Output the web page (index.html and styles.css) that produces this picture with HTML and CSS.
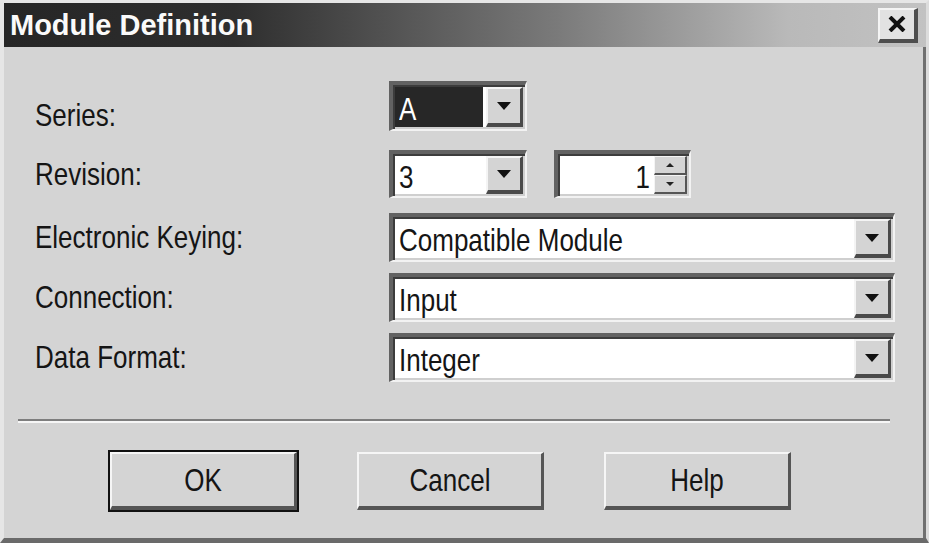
FILE: index.html
```html
<!DOCTYPE html>
<html lang="en">
<head>
    <meta charset="UTF-8">
    <title>Module Definition</title>
    <link rel="stylesheet" href="styles.css">
</head>
<body>
    <div class="window">
        <div class="titlebar">
            <span class="title">Module Definition</span>
            <div class="close">
                <svg width="18" height="16" viewBox="0 0 18 16">
                    <path d="M2 1 L16 15 M16 1 L2 15" stroke="#111" stroke-width="4" fill="none"/>
                </svg>
            </div>
        </div>
        <div class="content">
            <div class="form">
                <div class="row row-series">
                    <span class="label label-series"><span class="txt">Series:</span></span>
                    <div class="combo combo-short">
                        <span class="value selected"><span class="txt">A</span></span>
                        <span class="drop"><svg width="14" height="8" viewBox="0 0 14 8"><path d="M0 0 H14 L7 8 Z" fill="#111"/></svg></span>
                    </div>
                </div>
                <div class="row row-revision">
                    <span class="label"><span class="txt">Revision:</span></span>
                    <div class="combo combo-short">
                        <span class="value"><span class="txt">3</span></span>
                        <span class="drop"><svg width="14" height="8" viewBox="0 0 14 8"><path d="M0 0 H14 L7 8 Z" fill="#111"/></svg></span>
                    </div>
                    <div class="combo spinner">
                        <span class="value num"><span class="txt">1</span></span>
                        <span class="spin">
                            <span class="spin-btn"><svg width="8" height="4" viewBox="0 0 8 4"><path d="M0 4 H8 L4 0 Z" fill="#222"/></svg></span>
                            <span class="spin-btn"><svg width="8" height="4" viewBox="0 0 8 4"><path d="M0 0 H8 L4 4 Z" fill="#222"/></svg></span>
                        </span>
                    </div>
                </div>
                <div class="row">
                    <span class="label"><span class="txt">Electronic Keying:</span></span>
                    <div class="combo combo-wide">
                        <span class="value"><span class="txt">Compatible Module</span></span>
                        <span class="drop"><svg width="14" height="8" viewBox="0 0 14 8"><path d="M0 0 H14 L7 8 Z" fill="#111"/></svg></span>
                    </div>
                </div>
                <div class="row">
                    <span class="label"><span class="txt">Connection:</span></span>
                    <div class="combo combo-wide">
                        <span class="value"><span class="txt">Input</span></span>
                        <span class="drop"><svg width="14" height="8" viewBox="0 0 14 8"><path d="M0 0 H14 L7 8 Z" fill="#111"/></svg></span>
                    </div>
                </div>
                <div class="row">
                    <span class="label"><span class="txt">Data Format:</span></span>
                    <div class="combo combo-wide">
                        <span class="value"><span class="txt">Integer</span></span>
                        <span class="drop"><svg width="14" height="8" viewBox="0 0 14 8"><path d="M0 0 H14 L7 8 Z" fill="#111"/></svg></span>
                    </div>
                </div>
            </div>
            <div class="separator"></div>
            <div class="buttons">
                <button class="btn btn-default"><span class="txt">OK</span></button>
                <button class="btn"><span class="txt">Cancel</span></button>
                <button class="btn"><span class="txt">Help</span></button>
            </div>
        </div>
    </div>
</body>
</html>
```

FILE: styles.css
```css
* {
    box-sizing: border-box;
}

body {
    margin: 0;
    background-color: #d8d8d8;
    font-family: "Liberation Sans", Arial, sans-serif;
    color: #151515;
}

/* the dialog text is tall and narrow, so stretch it up a bit */
.txt {
    display: inline-block;
    transform: scaleY(1.22);
}

.window {
    width: 929px;
    height: 543px;
    border-style: solid;
    border-width: 3px 3px 5px 4px;
    border-color: #e6e6e6 #dcdcdc #6a6a6a #e6e6e6;
    background-color: #d4d4d4;
    box-shadow: inset -3px 0 0 #707070;
    overflow: hidden;
}

.titlebar {
    height: 44px;
    display: flex;
    align-items: center;
    justify-content: space-between;
    padding: 0 8px 0 6px;
    background: linear-gradient(to right, #262626, #2e2e2e 25%, #7a7a7a 60%, #b9b9b9 85%, #c2c2c2);
}

.title {
    font-weight: bold;
    font-size: 29px;
    color: #fafafa;
}

.close {
    width: 40px;
    height: 35px;
    display: flex;
    align-items: center;
    justify-content: center;
    background-color: #e2e2e2;
    border-style: solid;
    border-width: 2px 4px 4px 2px;
    border-color: #f4f4f4 #4e4e4e #4e4e4e #f4f4f4;
}

.content {
    padding-top: 34px;
}

.form {
    padding-left: 31px;
}

.row {
    display: flex;
    align-items: center;
    height: 49px;
    margin-bottom: 11px;
}

.row-series {
    height: 50px;
    margin-bottom: 19px;
}

.row-revision {
    height: 48px;
    margin-bottom: 15px;
}

.label {
    width: 354px;
    font-size: 26px;
}

.label-series {
    padding-top: 18px;
}

.combo {
    height: 100%;
    display: flex;
    align-items: stretch;
    background-color: #fff;
    border-style: solid;
    border-width: 4px 2px 2px 4px;
    border-color: #626262 #f2f2f2 #f2f2f2 #626262;
    box-shadow: inset 2px 2px 0 #3c3c3c, inset -2px -2px 0 #cfcfcf;
    padding: 2px;
}

.combo-short {
    width: 138px;
}

.combo-wide {
    width: 506px;
}

.spinner {
    width: 137px;
    margin-left: 27px;
}

.value {
    flex: 1;
    display: flex;
    align-items: center;
    padding: 3px 0 0 4px;
    font-size: 26px;
    line-height: 1;
}

.selected {
    background-color: #272727;
    color: #fff;
    margin-right: 3px;
}

.num {
    justify-content: flex-end;
    padding-right: 4px;
}

.drop {
    width: 37px;
    display: flex;
    align-items: center;
    justify-content: center;
    background-color: #d4d4d4;
    border-style: solid;
    border-width: 2px 3px 4px 2px;
    border-color: #f4f4f4 #4a4a4a #4a4a4a #f4f4f4;
}

.spin {
    width: 33px;
    display: flex;
    flex-direction: column;
}

.spin-btn {
    flex: 1;
    display: flex;
    align-items: center;
    justify-content: center;
    background-color: #d4d4d4;
    border-style: solid;
    border-width: 1px 2px 2px 1px;
    border-color: #f4f4f4 #555 #555 #f4f4f4;
}

.separator {
    margin: 37px 0 0 14px;
    width: 872px;
    height: 4px;
    border-top: 2px solid #7e7e7e;
    border-bottom: 2px solid #f6f6f6;
}

.buttons {
    display: flex;
    gap: 60px;
    padding: 29px 0 0 106px;
}

.btn {
    width: 187px;
    height: 58px;
    font-family: "Liberation Sans", Arial, sans-serif;
    font-size: 26px;
    color: #151515;
    background-color: #d4d4d4;
    border-style: solid;
    border-width: 2px 3px 4px 2px;
    border-color: #f6f6f6 #555 #555 #f6f6f6;
    padding: 0;
}

.btn-default {
    outline: 2px solid #111;
}
```
